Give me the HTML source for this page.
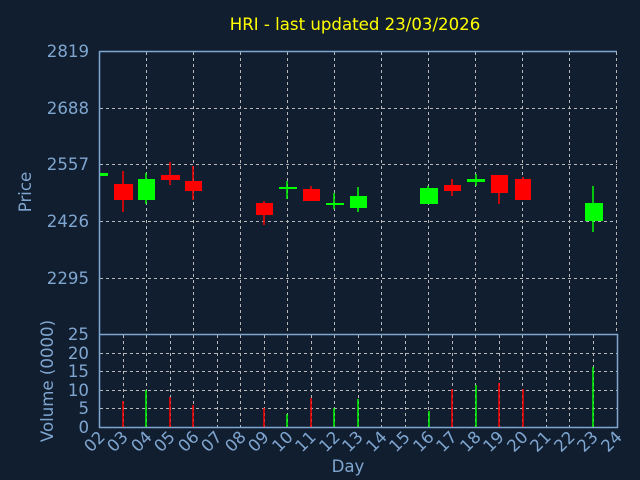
<!DOCTYPE html>
<html><head><meta charset="utf-8"><style>
html,body{margin:0;padding:0;background:#111e2f;}
svg{display:block;font-family:"DejaVu Sans","Liberation Sans",sans-serif;}
</style></head><body>
<svg width="640" height="480" viewBox="0 0 640 480" xmlns="http://www.w3.org/2000/svg">
<rect width="640" height="480" fill="#111e2f"/>
<text x="355" y="30" fill="#ffff00" font-size="16.6" text-anchor="middle">HRI - last updated 23/03/2026</text>
<g stroke="#b8b8b8" stroke-width="1" stroke-dasharray="3,3" fill="none">
<path d="M100 108.5H617M100 164.5H617M100 221.5H617M100 278.5H617"/>
<path d="M146.5 52V334M193.5 52V334M240.5 52V334M287.5 52V334M334.5 52V334M381.5 52V334M428.5 52V334M475.5 52V334M522.5 52V334M569.5 52V334M616.5 52V334"/>
<path d="M100 353.5H617M100 371.5H617M100 390.5H617M100 408.5H617"/>
<path d="M123.5 335V427M146.5 335V427M170.5 335V427M193.5 335V427M217.5 335V427M240.5 335V427M264.5 335V427M287.5 335V427M311.5 335V427M334.5 335V427M358.5 335V427M381.5 335V427M405.5 335V427M428.5 335V427M452.5 335V427M475.5 335V427M499.5 335V427M522.5 335V427M546.5 335V427M569.5 335V427M593.5 335V427"/>
</g>
<g stroke="#7fa6d0" stroke-width="1.5" fill="none">
<path d="M99.5 51.5H617"/>
<path d="M99.5 51V427.5H617.5V334.5H99.5"/>
</g>
<g stroke-width="1.5">
<line x1="123" y1="171" x2="123" y2="212" stroke="#ff0000"/>
<line x1="146" y1="173" x2="146" y2="204" stroke="#00ff00"/>
<line x1="170" y1="162" x2="170" y2="185" stroke="#ff0000"/>
<line x1="193" y1="166" x2="193" y2="200" stroke="#ff0000"/>
<line x1="264" y1="201" x2="264" y2="225" stroke="#ff0000"/>
<line x1="287" y1="181" x2="287" y2="199" stroke="#00ff00"/>
<line x1="311" y1="186" x2="311" y2="201" stroke="#ff0000"/>
<line x1="334" y1="193" x2="334" y2="209" stroke="#00ff00"/>
<line x1="358" y1="187" x2="358" y2="212" stroke="#00ff00"/>
<line x1="428" y1="186" x2="428" y2="204" stroke="#00ff00"/>
<line x1="452" y1="179" x2="452" y2="196" stroke="#ff0000"/>
<line x1="476" y1="174" x2="476" y2="186" stroke="#00ff00"/>
<line x1="499" y1="175" x2="499" y2="204" stroke="#ff0000"/>
<line x1="523" y1="177" x2="523" y2="200" stroke="#ff0000"/>
<line x1="593" y1="186" x2="593" y2="232" stroke="#00ff00"/>
</g>
<rect x="100" y="173" width="8" height="3" fill="#00ff00"/>
<rect x="114" y="184" width="19" height="16" fill="#ff0000"/>
<rect x="138" y="179" width="17" height="21" fill="#00ff00"/>
<rect x="161" y="175" width="19" height="5" fill="#ff0000"/>
<rect x="185" y="181" width="17" height="10" fill="#ff0000"/>
<rect x="256" y="203" width="17" height="12" fill="#ff0000"/>
<rect x="279" y="187" width="18" height="2" fill="#00ff00"/>
<rect x="303" y="189" width="17" height="12" fill="#ff0000"/>
<rect x="326" y="203" width="18" height="2" fill="#00ff00"/>
<rect x="350" y="196" width="17" height="12" fill="#00ff00"/>
<rect x="420" y="188" width="18" height="16" fill="#00ff00"/>
<rect x="444" y="185" width="17" height="6" fill="#ff0000"/>
<rect x="467" y="179" width="18" height="3" fill="#00ff00"/>
<rect x="491" y="175" width="17" height="18" fill="#ff0000"/>
<rect x="515" y="179" width="16" height="21" fill="#ff0000"/>
<rect x="585" y="203" width="18" height="18" fill="#00ff00"/>
<g stroke-width="1.5">
<line x1="123" y1="427" x2="123" y2="401" stroke="#ff0000"/>
<line x1="146" y1="427" x2="146" y2="390" stroke="#00ff00"/>
<line x1="170" y1="427" x2="170" y2="397" stroke="#ff0000"/>
<line x1="193" y1="427" x2="193" y2="405" stroke="#ff0000"/>
<line x1="264" y1="427" x2="264" y2="408" stroke="#ff0000"/>
<line x1="287" y1="427" x2="287" y2="414" stroke="#00ff00"/>
<line x1="311" y1="427" x2="311" y2="398" stroke="#ff0000"/>
<line x1="334" y1="427" x2="334" y2="408" stroke="#00ff00"/>
<line x1="358" y1="427" x2="358" y2="399" stroke="#00ff00"/>
<line x1="429" y1="427" x2="429" y2="411" stroke="#00ff00"/>
<line x1="452" y1="427" x2="452" y2="389" stroke="#ff0000"/>
<line x1="476" y1="427" x2="476" y2="385" stroke="#00ff00"/>
<line x1="499" y1="427" x2="499" y2="383" stroke="#ff0000"/>
<line x1="523" y1="427" x2="523" y2="389" stroke="#ff0000"/>
<line x1="593" y1="427" x2="593" y2="367" stroke="#00ff00"/>
</g>
<g fill="#7fa6d0" font-size="16.6" text-anchor="end">
<text x="89" y="57">2819</text>
<text x="89" y="114">2688</text>
<text x="89" y="170">2557</text>
<text x="89" y="227">2426</text>
<text x="89" y="284">2295</text>
<text x="89" y="340">25</text>
<text x="89" y="359">20</text>
<text x="89" y="377">15</text>
<text x="89" y="396">10</text>
<text x="89" y="414">5</text>
<text x="89" y="433">0</text>
</g>
<g fill="#7fa6d0" font-size="16.6" text-anchor="middle">
<text transform="translate(31,192) rotate(-90)">Price</text>
<text transform="translate(53,381) rotate(-90)">Volume (0000)</text>
<text x="348" y="472">Day</text>
</g>
<g fill="#7fa6d0" font-size="16.6" text-anchor="end">
<text transform="translate(106,438) rotate(-45)">02</text>
<text transform="translate(129,438) rotate(-45)">03</text>
<text transform="translate(153,438) rotate(-45)">04</text>
<text transform="translate(176,438) rotate(-45)">05</text>
<text transform="translate(200,438) rotate(-45)">06</text>
<text transform="translate(223,438) rotate(-45)">07</text>
<text transform="translate(247,438) rotate(-45)">08</text>
<text transform="translate(270,438) rotate(-45)">09</text>
<text transform="translate(294,438) rotate(-45)">10</text>
<text transform="translate(317,438) rotate(-45)">11</text>
<text transform="translate(341,438) rotate(-45)">12</text>
<text transform="translate(364,438) rotate(-45)">13</text>
<text transform="translate(388,438) rotate(-45)">14</text>
<text transform="translate(411,438) rotate(-45)">15</text>
<text transform="translate(435,438) rotate(-45)">16</text>
<text transform="translate(458,438) rotate(-45)">17</text>
<text transform="translate(482,438) rotate(-45)">18</text>
<text transform="translate(505,438) rotate(-45)">19</text>
<text transform="translate(529,438) rotate(-45)">20</text>
<text transform="translate(552,438) rotate(-45)">21</text>
<text transform="translate(576,438) rotate(-45)">22</text>
<text transform="translate(599,438) rotate(-45)">23</text>
<text transform="translate(623,438) rotate(-45)">24</text>
</g>
</svg>
</body></html>
